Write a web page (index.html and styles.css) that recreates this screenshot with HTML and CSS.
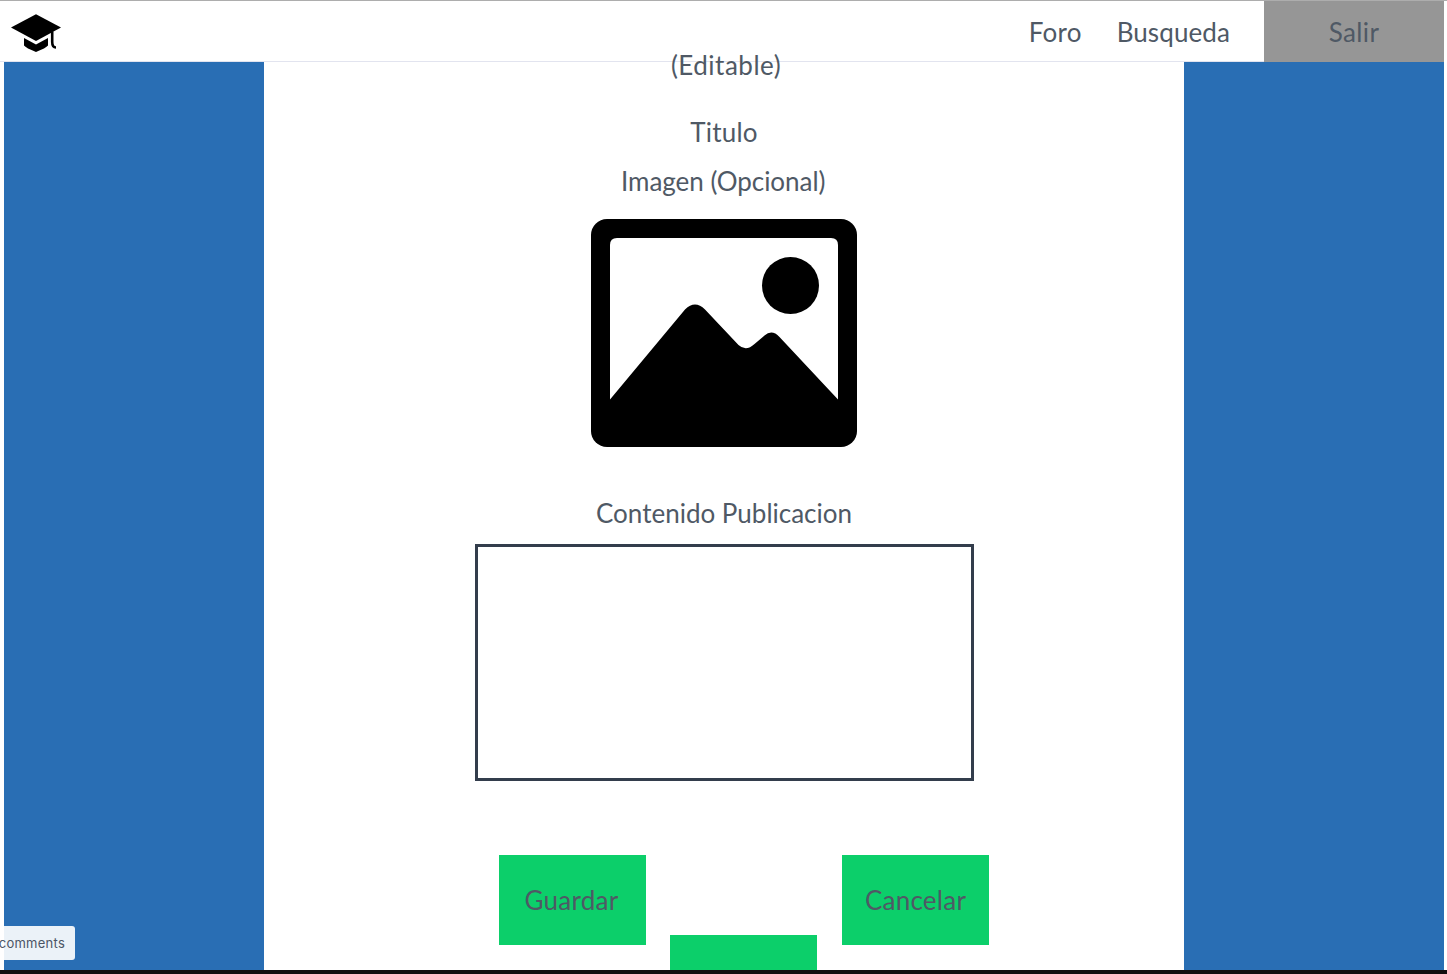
FILE: index.html
```html
<!DOCTYPE html>
<html lang="es">
<head>
<meta charset="utf-8">
<title>Publicacion</title>
<link rel="stylesheet" href="styles.css">
</head>
<body>
<div class="page">
  <header class="topbar">
    <svg class="logo" viewBox="0 0 50 38" width="50" height="38" aria-label="Inicio">
      <path d="M25 0.300 50 13.500 25 27 0 13.500Z"/>
      <path d="M13 24V31.500Q15 34 25 38Q35 34 37 31.500V24L25 30.500Z"/>
      <path d="M41.200 17.500V28Q41.200 33.500 45 33.500" fill="none" stroke="#000" stroke-width="2.600"/>
    </svg>
    <nav class="nav">
      <a class="foro">Foro</a>
      <a class="busqueda">Busqueda</a>
      <a class="salir">Salir</a>
    </nav>
  </header>
  <main class="content">
    <section class="panel">
      <p class="editable">(Editable)</p>
      <p class="titulo">Titulo</p>
      <p class="imagen">Imagen (Opcional)</p>
      <svg class="picture" viewBox="0 0 266 228" width="266" height="228">
        <rect width="266" height="228" rx="16"/>
        <path fill="#fff" d="M19 180.500V26Q19 19 26 19H240Q247 19 247 26V180.500L188.500 118Q181 110 173.500 116.500L163.500 125Q155 133 147.500 126L114 90.500Q104 80.500 94 90.500Z"/>
        <circle cx="199.500" cy="66.500" r="28.500"/>
      </svg>
      <p class="label">Contenido Publicacion</p>
      <div class="field"></div>
      <div class="actions">
        <button class="btn guardar">Guardar</button>
        <button class="btn cancelar">Cancelar</button>
      </div>
      <div class="btn extra"></div>
    </section>
  </main>
  <div class="comments">comments</div>
</div>
<div class="bottom"></div>
</body>
</html>
```
FILE: styles.css
```css
* { box-sizing: border-box; }
body {
  margin: 0;
  height: 974px;
  overflow: hidden;
  display: flex;
  flex-direction: column;
  background: #fff;
  border-top: 1px solid #adadad;
  color: #4f5965;
  font: 26px/32px Lato, sans-serif;
}
p { margin: 0; }
.page {
  position: relative;
  display: flex;
  flex-direction: column;
  height: 969px;
  padding: 0 3px 0 4px;
  overflow: hidden;
}
.topbar {
  display: flex;
  flex: none;
  justify-content: space-between;
  height: 61px;
  margin-left: -4px;
  padding-left: 11px;
  border-bottom: 1px solid #e2e4ef;
}
.logo { margin-top: 13px; }
.nav { display: flex; line-height: 62px; }
.foro { margin-right: 35px; letter-spacing: .2px; }
.busqueda { margin-right: 34px; letter-spacing: .1px; }
.salir {
  width: 180px;
  height: 61px;
  background: #969696;
  letter-spacing: .4px;
  text-align: center;
}
.content {
  display: flex;
  justify-content: center;
  flex: 1;
  min-height: 0;
  background: #296eb4;
}
.panel {
  display: flex;
  flex-direction: column;
  align-items: center;
  width: 920px;
  background: #fff;
}
.panel > * { flex: none; }
.editable { margin-top: -13px; padding-left: 4px; letter-spacing: .5px; }
.titulo { margin-top: 35px; letter-spacing: .2px; }
.imagen { margin-top: 17px; padding-right: 1.5px; letter-spacing: -.04px; }
.picture { margin-top: 22px; }
.label { margin-top: 50px; }
.field {
  width: 499px;
  height: 237px;
  margin-top: 15px;
  margin-left: 1px;
  border: 3px solid #333d4c;
}
.actions {
  display: flex;
  gap: 196px;
  margin-top: 74px;
  padding-left: 40px;
}
.btn {
  width: 147px;
  height: 90px;
  padding: 0;
  border: 0;
  background: #0ccf6a;
  color: inherit;
  font: inherit;
}
.guardar { padding-right: 2px; letter-spacing: .3px; }
.cancelar { letter-spacing: .25px; }
.extra { margin-top: -10px; margin-left: 39px; }
.comments {
  position: absolute;
  left: -20px;
  bottom: 10px;
  width: 95px;
  height: 34px;
  padding-right: 10px;
  border-radius: 3px;
  background: rgba(255, 255, 255, .91);
  color: #4c5566;
  font: 13px/35px Inter, sans-serif;
  letter-spacing: .25px;
  text-align: right;
}
.bottom { flex: none; height: 4px; background: #110e10; }
```
